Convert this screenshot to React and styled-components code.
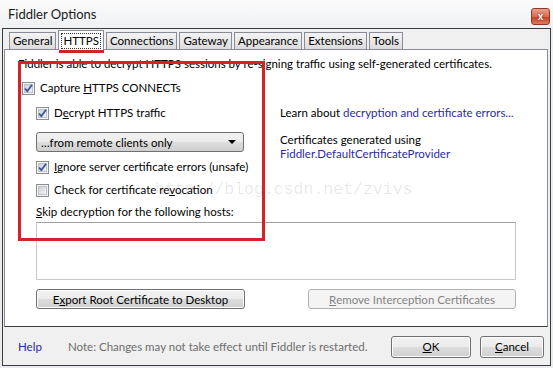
import React from "react";
import styled, { createGlobalStyle } from "styled-components";

const GlobalStyle = createGlobalStyle`
  html, body {
    margin: 0;
    padding: 0;
  }
  body {
    width: 553px;
    height: 368px;
    overflow: hidden;
    font-family: Lato, "Liberation Sans", sans-serif;
    font-size: 11.5px;
    color: #000;
  }
`;

const Window = styled.div`
  position: relative;
  width: 553px;
  height: 368px;
  box-sizing: border-box;
  padding: 0 2px 2px 2px;
  background: linear-gradient(#fbfbfb, #eef0f2 30px, #e9ebee);
  display: flex;
  flex-direction: column;
`;

const TitleBar = styled.div`
  height: 28px;
  display: flex;
  justify-content: space-between;
  align-items: flex-start;
  padding: 0 0 0 6px;
`;

const Title = styled.div`
  font-size: 13px;
  margin-top: 6px;
  color: #1a1a1a;
`;

const CloseButton = styled.div`
  width: 17px;
  height: 15px;
  margin-top: 8px;
  margin-right: 1px;
  border: 1px solid #8d3a2c;
  border-radius: 3px;
  background: linear-gradient(#eba08e, #dc6a50 50%, #c73c22 51%, #dd7a5c);
  color: #fff;
  font: bold 10px "Liberation Sans", sans-serif;
  display: flex;
  align-items: center;
  justify-content: center;
  text-shadow: 0 0 2px #5a1a10;
`;

const Frame = styled.div`
  flex: 1;
  border: 1px solid #3c3c3c;
  background: #f0f0f0;
  display: flex;
  flex-direction: column;
`;

const TabArea = styled.div`
  padding: 2px 2px 0 1px;
  display: flex;
  flex-direction: column;
`;

const TabStrip = styled.div`
  display: flex;
  align-items: flex-end;
  padding-left: 5px;
  height: 19px;
  position: relative;
  z-index: 1;
  margin-bottom: -1px;
`;

const Tab = styled.div`
  box-sizing: border-box;
  height: ${(p) => (p.$active ? "20px" : "18px")};
  padding: 0 ${(p) => (p.$active ? "3px" : "3px")};
  margin-right: 2px;
  border: 1px solid #898c95;
  border-bottom: ${(p) => (p.$active ? "none" : "1px solid #898c95")};
  background: ${(p) =>
    p.$active ? "#fff" : "linear-gradient(#f3f3f3, #e8e8e8 50%, #dcdcdc)"};
  display: flex;
  align-items: center;
  line-height: 14px;
`;

const Focus = styled.span`
  outline: 1px dotted #333;
  padding: 0 1px;
`;

const Page = styled.div`
  position: relative;
  height: 278px;
  box-sizing: border-box;
  border: 1px solid #898c95;
  border-bottom-color: #3c3c3c;
  background: #fff;
  padding: 7px 0 0 13px;
  display: flex;
  flex-direction: column;
`;

const Intro = styled.div`
  line-height: 14px;
  white-space: nowrap;
`;

const CheckRow = styled.div`
  display: flex;
  align-items: center;
  gap: 5px;
  height: 14px;
  line-height: 14px;
  margin-top: ${(p) => p.$top || 0}px;
  padding-left: ${(p) => p.$indent || 0}px;
`;

const Columns = styled.div`
  display: flex;
  margin-top: 11px;
`;

const LeftCol = styled.div`
  width: 244px;
  padding-left: 18px;
  display: flex;
  flex-direction: column;
`;

const RightCol = styled.div`
  display: flex;
  flex-direction: column;
  line-height: 14px;
`;

const Line = styled.div`
  line-height: 14px;
  margin-top: ${(p) => p.$top || 0}px;
`;

const Link = styled.span`
  color: #2b2ba0;
`;

const Select = styled.div`
  box-sizing: border-box;
  width: 208px;
  height: 20px;
  margin-top: 12px;
  border: 1px solid #707070;
  border-radius: 3px;
  background: linear-gradient(#f2f2f2, #ebebeb 50%, #dddddd 51%, #cfcfcf);
  display: flex;
  align-items: center;
  justify-content: space-between;
  padding: 0 7px 0 4px;
`;

const Arrow = styled.span`
  width: 0;
  height: 0;
  border-left: 4px solid transparent;
  border-right: 4px solid transparent;
  border-top: 4px solid #000;
`;

const HostsBox = styled.div`
  box-sizing: border-box;
  width: 480px;
  height: 58px;
  margin: 3px 0 0 18px;
  border: 1px solid #c9c9c9;
  border-top-color: #a0a0a0;
  background: #fff;
`;

const ButtonRow = styled.div`
  display: flex;
  justify-content: space-between;
  width: 480px;
  margin: 9px 0 0 18px;
`;

const Button = styled.div`
  box-sizing: border-box;
  width: ${(p) => p.$w}px;
  height: ${(p) => p.$h || 20}px;
  border: 1px solid ${(p) => (p.$disabled ? "#adb2b5" : "#707070")};
  border-radius: 3px;
  background: ${(p) =>
    p.$disabled
      ? "#f4f4f4"
      : "linear-gradient(#f2f2f2, #ebebeb 50%, #dddddd 51%, #cfcfcf)"};
  color: ${(p) => (p.$disabled ? "#838383" : "#000")};
  box-shadow: ${(p) => (p.$disabled ? "none" : "inset 0 0 0 1px #fcfcfc")};
  display: flex;
  align-items: center;
  justify-content: center;
`;

const Footer = styled.div`
  flex: 1;
  display: flex;
  align-items: center;
  padding: 0 0 0 15px;
`;

const Help = styled.span`
  color: #2b2ba0;
  width: 50px;
`;

const Note = styled.span`
  color: #6d6d6d;
  flex: 1;
`;

const FooterButtons = styled.div`
  display: flex;
  gap: 9px;
  margin-right: 6px;
  margin-top: 1px;
`;

const Mark = styled.div`
  position: absolute;
  border: 3px solid #d3222a;
  box-sizing: border-box;
  pointer-events: none;
`;

const Watermark = styled.div`
  position: absolute;
  left: 150px;
  top: 130px;
  font-family: "Liberation Mono", monospace;
  font-size: 16.5px;
  color: rgba(0, 0, 0, 0.1);
  white-space: nowrap;
  pointer-events: none;
`;

const U = styled.span`
  text-decoration: underline;
`;

const Checkbox = ({ checked }) => (
  <svg width="13" height="13" viewBox="0 0 13 13">
    <defs>
      <linearGradient id="cbg" x1="0" y1="0" x2="1" y2="1">
        <stop offset="0" stopColor="#cbcfd5" />
        <stop offset="1" stopColor="#f6f6f6" />
      </linearGradient>
    </defs>
    <rect x="0.5" y="0.5" width="12" height="12" fill="#f4f4f4" stroke="#8e8f8f" />
    <rect x="2.5" y="2.5" width="8" height="8" fill="url(#cbg)" stroke="#c0c4ca" />
    {checked && (
      <path
        d="M3 6.5 L5.3 9.2 L10 2.8"
        fill="none"
        stroke="#3d5a9c"
        strokeWidth="1.9"
        strokeLinejoin="round"
      />
    )}
  </svg>
);

const tabs = ["General", "HTTPS", "Connections", "Gateway", "Appearance", "Extensions", "Tools"];

export default function App() {
  return (
    <>
      <GlobalStyle />
      <Window>
        <TitleBar>
          <Title>Fiddler Options</Title>
          <CloseButton>x</CloseButton>
        </TitleBar>
        <Frame>
          <TabArea>
            <TabStrip>
              {tabs.map((t) =>
                t === "HTTPS" ? (
                  <Tab key={t} $active>
                    <Focus>{t}</Focus>
                  </Tab>
                ) : (
                  <Tab key={t}>{t}</Tab>
                )
              )}
            </TabStrip>
            <Page>
              <Intro>
                Fiddler is able to decrypt HTTPS sessions by re-signing traffic using
                self-generated certificates.
              </Intro>
              <CheckRow $top={10} $indent={4}>
                <Checkbox checked />
                <span>
                  Capture <U>H</U>TTPS CONNECTs
                </span>
              </CheckRow>
              <Columns>
                <LeftCol>
                  <CheckRow>
                    <Checkbox checked />
                    <span>
                      D<U>e</U>crypt HTTPS traffic
                    </span>
                  </CheckRow>
                  <Select>
                    <span>…from remote clients only</span>
                    <Arrow />
                  </Select>
                  <CheckRow $top={8}>
                    <Checkbox checked />
                    <span>
                      <U>I</U>gnore server certificate errors (unsafe)
                    </span>
                  </CheckRow>
                  <CheckRow $top={9}>
                    <Checkbox />
                    <span>
                      Check for certificate re<U>v</U>ocation
                    </span>
                  </CheckRow>
                  <Line $top={8}>
                    <U>S</U>kip decryption for the following hosts:
                  </Line>
                </LeftCol>
                <RightCol>
                  <Line>
                    Learn about <Link>decryption and certificate errors...</Link>
                  </Line>
                  <Line $top={13}>Certificates generated using</Line>
                  <Line>
                    <Link>Fiddler.DefaultCertificateProvider</Link>
                  </Line>
                </RightCol>
              </Columns>
              <HostsBox />
              <ButtonRow>
                <Button $w={209}>
                  E<U>x</U>port Root Certificate to Desktop
                </Button>
                <Button $w={208} $disabled>
                  <U>R</U>emove Interception Certificates
                </Button>
              </ButtonRow>
              <Watermark>http://blog.csdn.net/zvivs</Watermark>
            </Page>
          </TabArea>
          <Footer>
            <Help>Help</Help>
            <Note>Note: Changes may not take effect until Fiddler is restarted.</Note>
            <FooterButtons>
              <Button $w={80} $h={22}>
                <U>O</U>K
              </Button>
              <Button $w={64} $h={22}>
                <U>C</U>ancel
              </Button>
            </FooterButtons>
          </Footer>
        </Frame>
        <Mark style={{ left: 18, top: 61, width: 247, height: 180 }} />
        <Mark style={{ left: 59, top: 30, width: 45, height: 23 }} />
      </Window>
    </>
  );
}
